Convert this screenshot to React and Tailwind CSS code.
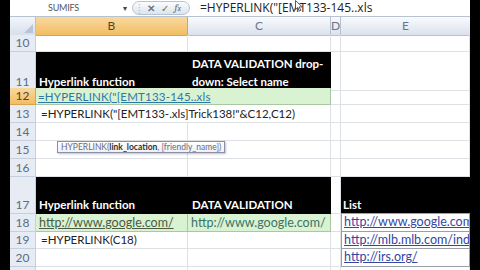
import React from 'react';

const COLS = "grid shrink-0 grid-cols-[26px_152px_143px_10px_129px]";
const FONT = { fontFamily: "Lato, 'Open Sans', sans-serif" };

const RowHead = ({ n, active }) => (
  <div className={`flex items-end justify-center pb-[1px] border-r border-b text-[12px] leading-[14px] ${active ? "bg-gradient-to-b from-[#f9d99f] to-[#f1bd62] border-[#d9a44a] text-[#5a4420]" : "bg-[#e6ebf4] border-[#c5cfdd] text-[#5d6b82]"}`}>
    <span>{n}</span>
  </div>
);

const C = ({ className = "", children }) => (
  <div className={`relative border-r border-b border-[#dde1e6] whitespace-nowrap ${className}`}>{children}</div>
);

const Blk = ({ className = "", children }) => (
  <div className={`bg-black text-white font-bold text-[11.5px] whitespace-nowrap ${className}`}>{children}</div>
);

const Link = ({ children }) => (
  <div className="relative border border-[#9aa0aa] -mt-px bg-white overflow-hidden whitespace-nowrap text-[12.5px] leading-[16px] pl-[2px] text-[#3346a3] underline">
    {children}
  </div>
);

const EmptyRow = ({ n, h }) => (
  <div className={`${COLS} ${h}`}>
    <RowHead n={n} /><C /><C /><C /><C />
  </div>
);

export default function App() {
  return (
    <div className="w-[480px] h-[270px] bg-black overflow-hidden px-[10px] relative" style={FONT}>
      <div className="w-[460px] bg-white flex flex-col">
        {/* formula bar */}
        <div className="h-[17px] flex items-center border-b border-[#b9c2cf] bg-white shrink-0">
          <div className="w-[113px] pl-[38px] text-[9px] text-[#555] tracking-tight">SUMIFS</div>
          <div className="w-[9px] text-[8px] text-[#444]">▾</div>
          <div className="w-[58px] h-[14px] rounded-full border border-[#b7c3d3] bg-gradient-to-b from-[#fbfcfe] to-[#dde4ee] flex items-center gap-[6px] pl-[5px] text-[10px] text-[#7a8596]">
            <span className="text-[#aab4c2]">⁞</span>
            <span className="font-bold text-[#6f7785]">✕</span>
            <span className="text-[#5a7a4a]">✓</span>
            <span className="italic font-serif text-[#667]">f<span className="text-[8px]">x</span></span>
          </div>
          <div className="pl-[10px] text-[12px] text-[#222] whitespace-nowrap" style={{ fontFamily: "'Open Sans', sans-serif" }}>=HYPERLINK("[EMT133-145..xls</div>
        </div>
        {/* column headers */}
        <div className={`${COLS} h-[18px] text-[12px] text-[#6c7688]`}>
          <div className="bg-gradient-to-b from-[#f3f6fb] to-[#d6dfeb] border-r border-b border-[#b6c2d2] flex items-end justify-end p-[2px]">
            <div className="w-0 h-0 border-l-[9px] border-l-transparent border-b-[9px] border-b-[#b8c5d8]" />
          </div>
          <div className="bg-gradient-to-b from-[#f9d99f] to-[#f1bd62] border-r border-b border-[#d9a44a] flex items-center justify-center text-[#5a4420]">B</div>
          <div className="bg-gradient-to-b from-[#f9fbfd] to-[#dbe2ed] border-r border-b border-[#b6c2d2] flex items-center justify-center">C</div>
          <div className="bg-gradient-to-b from-[#f9fbfd] to-[#dbe2ed] border-r border-b border-[#b6c2d2] flex items-center justify-center">D</div>
          <div className="bg-gradient-to-b from-[#f9fbfd] to-[#dbe2ed] border-b border-[#b6c2d2] flex items-center justify-center">E</div>
        </div>

        <EmptyRow n="10" h="h-[17px]" />

        {/* row 11 */}
        <div className={`${COLS} h-[36px]`}>
          <RowHead n="11" />
          <Blk className="flex items-end pl-[3px] pb-[2px] leading-[14px]">Hyperlink function</Blk>
          <Blk className="pl-[4px] pt-[3px] leading-[18px]">DATA VALIDATION drop-<br />down: Select name</Blk>
          <C /><C />
        </div>
        {/* row 12 */}
        <div className={`${COLS} h-[17px]`}>
          <RowHead n="12" active />
          <div className="col-span-2 bg-[#d9f2d2] border-r border-b border-[#a9c7a2] flex items-end pl-[2px] text-[11.5px] leading-[15px] text-[#2f78a6] whitespace-nowrap tracking-[0.2px]">
            <span className="underline">=HYPERLINK("[EMT133-145..xls</span>
          </div>
          <C /><C />
        </div>
        {/* row 13 */}
        <div className={`${COLS} h-[18px]`}>
          <RowHead n="13" />
          <div className="border-b border-[#dde1e6] whitespace-nowrap text-[11.5px] leading-[17px] text-[#222] pl-[5px]">=HYPERLINK("[EMT133-.xls]Trick138!"&amp;C12,C12)</div>
          <C /><C /><C />
        </div>

        <EmptyRow n="14" h="h-[18px]" />
        <EmptyRow n="15" h="h-[18px]" />
        <EmptyRow n="16" h="h-[18px]" />

        {/* row 17 */}
        <div className={`${COLS} h-[37px]`}>
          <RowHead n="17" />
          <Blk className="flex items-end pl-[3px] pb-[2px] leading-[14px]">Hyperlink function</Blk>
          <Blk className="flex items-end pl-[4px] pb-[2px] leading-[14px]">DATA VALIDATION</Blk>
          <C />
          <Blk className="flex items-end pl-[2px] pb-[2px] leading-[14px]">List</Blk>
        </div>
        {/* row 18 */}
        <div className={`${COLS} h-[18px]`}>
          <RowHead n="18" />
          <div className="bg-[#d9f2d2] border-r border-b border-[#a9c7a2] pl-[3px] text-[12.5px] leading-[17px] text-[#4c5a44] whitespace-nowrap overflow-hidden"><span className="underline">http://www.google.com/</span></div>
          <div className="bg-[#d9f2d2] border-r border-b border-[#a9c7a2] pl-[3px] text-[12.5px] leading-[17px] text-[#3b7367] whitespace-nowrap overflow-hidden">http://www.google.com/</div>
          <C />
          <Link>http://www.google.com/</Link>
        </div>
        {/* row 19 */}
        <div className={`${COLS} h-[17px]`}>
          <RowHead n="19" />
          <C className="text-[11.5px] leading-[16px] text-[#222] pl-[5px]">=HYPERLINK(C18)</C>
          <C /><C />
          <Link>http://mlb.mlb.com/index.jsp</Link>
        </div>
        {/* row 20 */}
        <div className={`${COLS} h-[18px]`}>
          <RowHead n="20" /><C /><C /><C />
          <Link>http://irs.org/</Link>
        </div>
        <EmptyRow n="" h="h-[20px]" />
      </div>

      {/* tooltip */}
      <div className="absolute left-[57px] top-[141px] h-[12px] px-[3px] border border-[#8a8fa6] bg-gradient-to-b from-white to-[#eef0f6] shadow-[1px_1px_2px_rgba(0,0,0,0.25)] text-[8.5px] leading-[10px] text-[#666b80] whitespace-nowrap">
        HYPERLINK(<span className="font-bold text-[#333]">link_location</span>, [friendly_name])
      </div>

      {/* mouse cursor */}
      <svg className="absolute left-[295px] top-[0px]" width="8" height="12" viewBox="0 0 8 12">
        <path d="M0.5 0.5 L0.5 9.5 L2.8 7.4 L4.4 11 L5.8 10.4 L4.2 6.9 L7.2 6.9 Z" fill="white" stroke="#333" strokeWidth="0.8" />
      </svg>
    </div>
  );
}
